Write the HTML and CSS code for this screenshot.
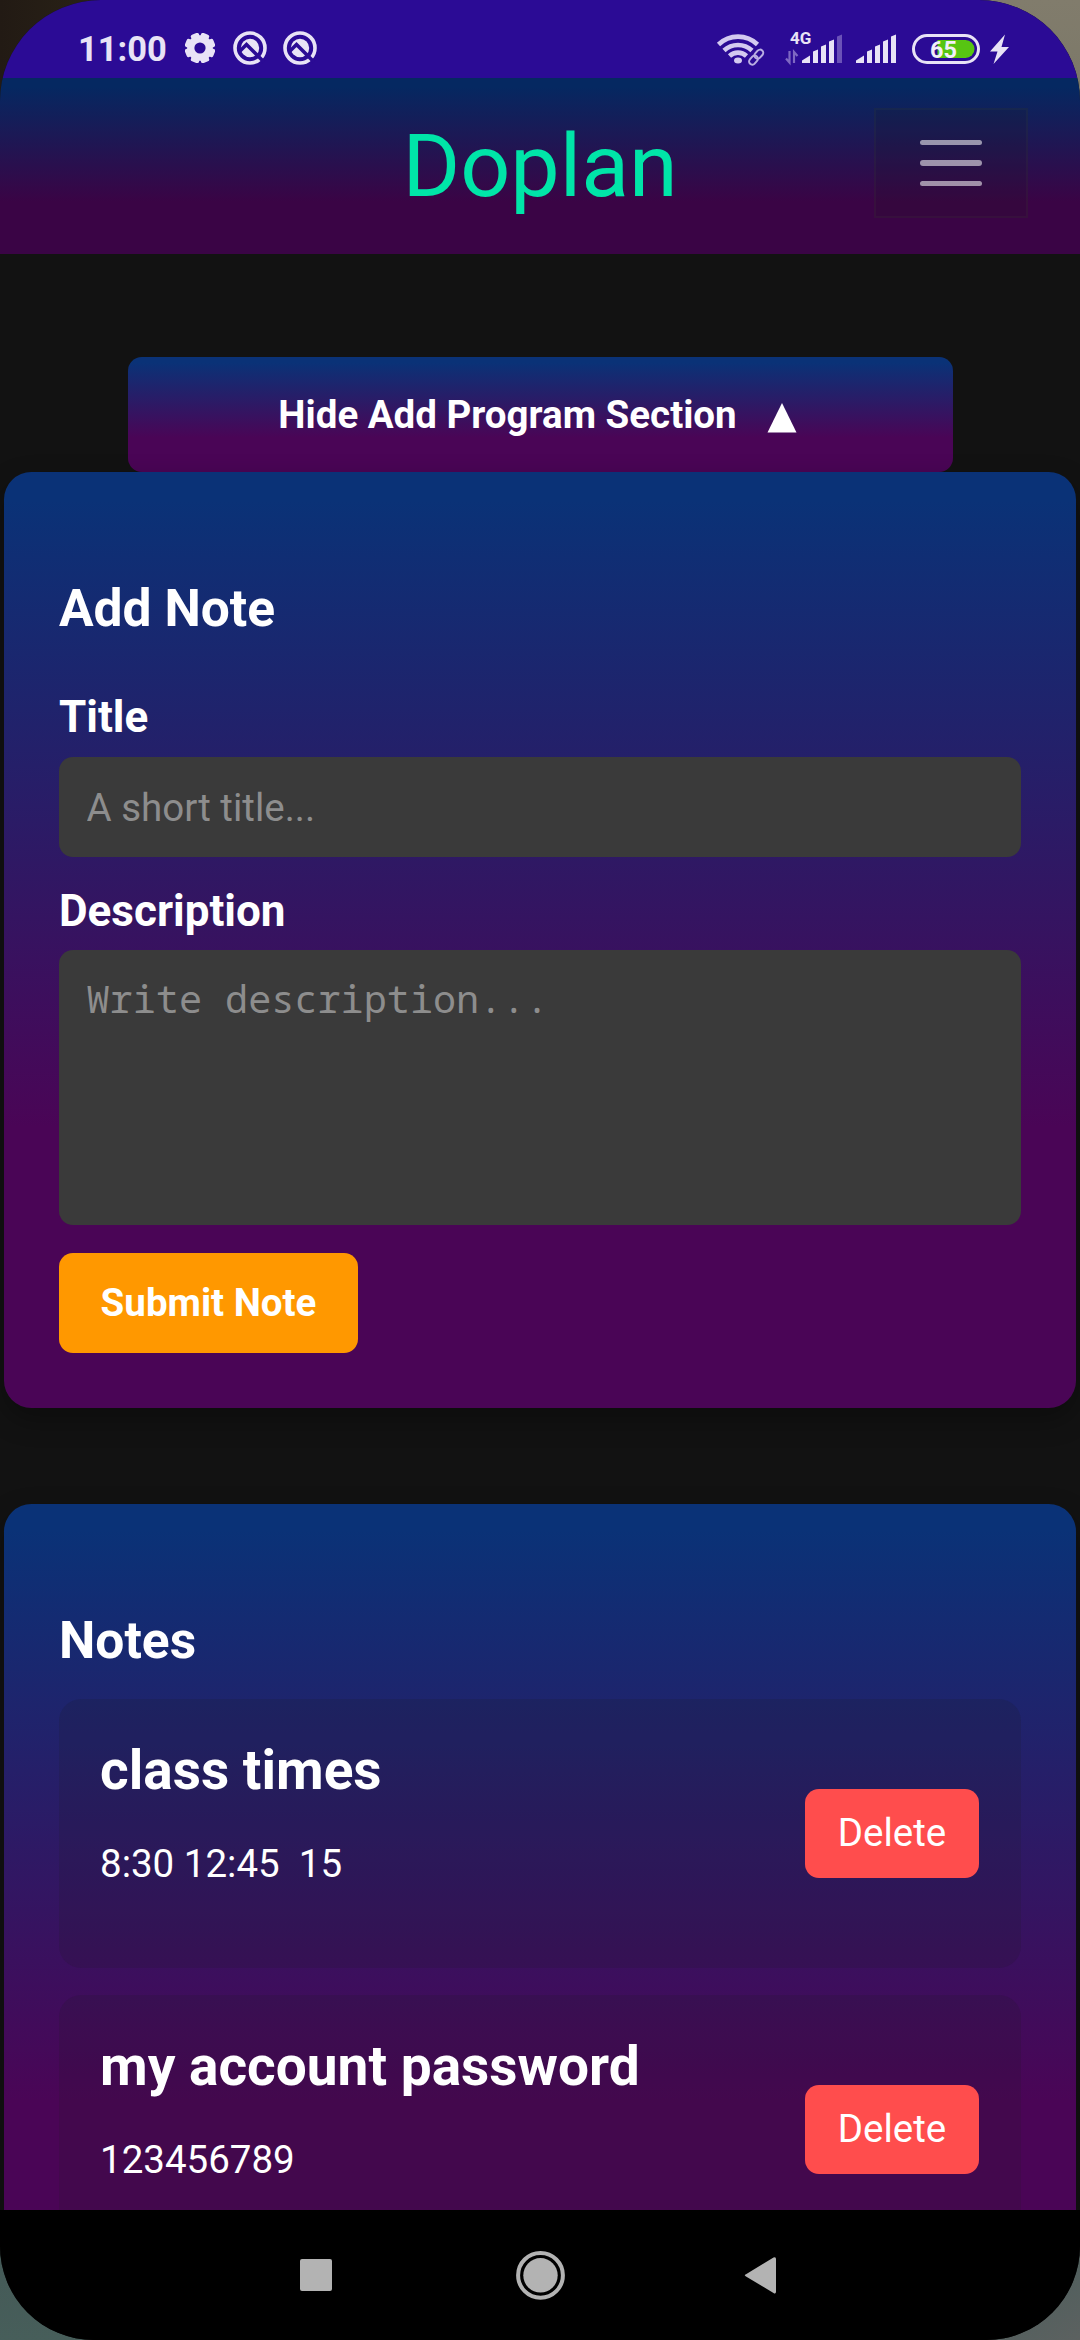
FILE: index.html
```html
<!DOCTYPE html>
<html lang="en">
<head>
<meta charset="utf-8">
<title>Doplan</title>
<link rel="stylesheet" href="styles.css">
</head>
<body>
<div class="screen">
  <div class="statusbar">
    <span class="clock">11:00</span>
    <svg class="gear" width="30" height="30" viewBox="-15 -15 30 30"><g fill="#e8e3f6" transform="rotate(22.5)"><rect x="-4.3" y="-15.300" width="8.600" height="30.600" rx="2"/><rect x="-4.3" y="-15.300" width="8.600" height="30.600" rx="2" transform="rotate(45)"/><rect x="-4.3" y="-15.300" width="8.600" height="30.600" rx="2" transform="rotate(90)"/><rect x="-4.3" y="-15.300" width="8.600" height="30.600" rx="2" transform="rotate(135)"/><circle r="12.8"/></g><circle r="5.6" fill="#2b0b95"/></svg>
    <svg class="badge" width="34" height="34" viewBox="-17 -17 34 34"><circle r="15" fill="none" stroke="#e8e3f6" stroke-width="3.6"/><circle r="9.2" fill="#e8e3f6"/><path d="M-10 3L-3.500-3.500L14 14" fill="none" stroke="#2b0b95" stroke-width="3.600"/></svg>
    <svg class="badge" width="34" height="34" viewBox="-17 -17 34 34"><circle r="15" fill="none" stroke="#e8e3f6" stroke-width="3.6"/><circle r="9.2" fill="#e8e3f6"/><path d="M-10 3L-3.500-3.500L14 14" fill="none" stroke="#2b0b95" stroke-width="3.600"/></svg>
    <svg class="system" width="300" height="40" viewBox="714 28 300 40">
      <g fill="none" stroke="#d3caf0" stroke-width="4.6"><path d="M718.5 44.5A28 28 0 0 1 757.5 44.5"/><path d="M724 50.500A20.500 20.500 0 0 1 752 50.500"/><path d="M729.500 56A12.500 12.500 0 0 1 746.500 56"/></g>
      <ellipse cx="738" cy="60.500" rx="4" ry="3" fill="#d3caf0"/>
      <g fill="none" stroke="#b9aee2" stroke-width="2" transform="rotate(-48 756 57)"><rect x="747" y="54" width="10" height="6.400" rx="3.200"/><rect x="755" y="54" width="10" height="6.400" rx="3.200"/></g>
      <text x="790" y="44" class="net">4G</text>
      <path d="M789.500 51v11.500l-3.500-4M794 63V52l3.500 4" fill="none" stroke="#7e68c2" stroke-width="2.200"/>
      <g fill="#e8e3f6"><path d="M802 63v-2.500l8-5V63z"/><path d="M813 63V51.500l5-2V63z"/><path d="M821 63V46.500l5-2V63z"/><path d="M829 63V41.500l5-2V63z"/><path d="M856 63v-2.500l8-5V63z"/><path d="M867 63V51.500l5-2V63z"/><path d="M875 63V46.500l5-2V63z"/><path d="M883 63V41.500l5-2V63z"/><path d="M891 63V36.500l5-2V63z"/></g>
      <path d="M837 63V36.500l5-2V63z" fill="#6b52b8"/>
      <rect x="913.500" y="35.500" width="65" height="27" rx="13.500" fill="none" stroke="#e8e3f6" stroke-width="3"/>
      <path d="M937.500 40h28a9 9 0 0 1 0 18h-28z" fill="#57c512"/>
      <text x="930" y="57.500" class="charge">65</text>
      <path d="M1005 34.500l-15 17h7.500l-4 12.500 15.500-17h-7.500z" fill="#e8e3f6"/>
    </svg>
  </div>
  <header class="header">
    <h1 class="brand">Doplan</h1>
    <button class="toggler" aria-label="Menu"><span></span><span></span><span></span></button>
  </header>
  <main class="content">
    <button class="toggle">Hide Add Program Section<svg width="30" height="30" viewBox="0 0 30 30"><path d="M15 0L29.500 29.500H.5z" fill="#fff"/></svg></button>
    <section class="card form">
      <h3>Add Note</h3>
      <label for="title">Title</label>
      <input id="title" type="text" placeholder="A short title...">
      <label for="description">Description</label>
      <textarea id="description" placeholder="Write description..."></textarea>
      <button class="submit">Submit Note</button>
    </section>
    <section class="card notes">
      <h3>Notes</h3>
      <article class="note"><div><h4>class times</h4><p>8:30 12:45  15</p></div><button class="delete">Delete</button></article>
      <article class="note"><div><h4>my account password</h4><p>123456789</p></div><button class="delete">Delete</button></article>
    </section>
  </main>
  <nav class="navbar">
    <svg width="1080" height="130" viewBox="0 0 1080 130"><g fill="#b3b3b3"><rect x="300" y="49" width="32" height="32" rx="2"/><circle cx="540.5" cy="65.300" r="17.200"/><circle cx="540.5" cy="65.300" r="22.400" fill="none" stroke="#b3b3b3" stroke-width="4"/><path d="M746 64.300L773.500 47.500Q776 46.500 776 49V81.500Q776 84.500 773.500 83L746 66.500Q743.500 65.300 746 64.300z"/></g></svg>
  </nav>
</div>
</body>
</html>
```
FILE: styles.css
```css
* { box-sizing: border-box; }

body {
  margin: 0;
  width: 1080px;
  height: 2340px;
  overflow: hidden;
  font-family: Roboto, "Liberation Sans", sans-serif;
  background:
    linear-gradient(90deg, #221a14, #2b2417) 0 0 / 120px 120px no-repeat,
    linear-gradient(#817c6c, #7a7767) 100% 0 / 120px 120px no-repeat,
    linear-gradient(#435856, #475e5a) 0 100% / 120px 120px no-repeat,
    linear-gradient(150deg, #4f5f5d 50%, #5c6160) 100% 100% / 120px 120px no-repeat,
    #121212;
}

button, input, textarea {
  border: 0;
  font: inherit;
  color: #fff;
}

h1, h3, h4, p { margin: 0; }

.screen {
  height: 2340px;
  display: flex;
  flex-direction: column;
  overflow: hidden;
  background: #121212;
  border-radius: 101px 101px 94px 94px;
}

.statusbar {
  flex: none;
  height: 78px;
  display: flex;
  align-items: center;
  padding: 18px 66px 0 78px;
  background: #2b0b95;
}

.clock {
  width: 107px;
  padding-top: 1px;
  font-size: 34.5px;
  font-weight: 700;
  line-height: 40px;
  color: #e8e3f6;
}

.badge { margin-left: 18px; }
.badge + .badge { margin-left: 16px; }
.system { margin-left: auto; }

.net {
  font-size: 17px;
  font-weight: 700;
  fill: #e8e3f6;
}

.charge {
  font-size: 23.5px;
  font-weight: 700;
  fill: #f2effa;
}

.header {
  flex: none;
  height: 176px;
  display: grid;
  grid-template-columns: 1fr auto 1fr;
  align-items: center;
  padding: 0 52px;
  background: linear-gradient(#052861 5%, #3a0445 70%);
}

.brand {
  grid-column: 2;
  font-size: 88px;
  font-weight: 400;
  line-height: 104px;
  color: #00e5a8;
}

.toggler {
  justify-self: end;
  width: 154px;
  height: 110px;
  margin-top: -6px;
  padding: 0;
  display: flex;
  flex-direction: column;
  align-items: center;
  justify-content: center;
  gap: 15px;
  background: rgba(24, 24, 24, 0.15);
  border: 2px solid rgba(80, 95, 60, 0.1);
}

.toggler span {
  width: 62px;
  height: 5.5px;
  border-radius: 3px;
  background: rgba(255, 255, 255, 0.55);
}

.content {
  flex: 1;
  min-height: 0;
  overflow: hidden;
  padding: 103px 4px 0;
  display: flex;
  flex-direction: column;
}

.toggle {
  flex: none;
  align-self: center;
  width: 825px;
  height: 115px;
  padding: 0 5px 1px 0;
  display: flex;
  align-items: center;
  justify-content: center;
  gap: 30px;
  border-radius: 14px;
  font-size: 38.5px;
  font-weight: 700;
  background: linear-gradient(#0a3277 5%, #4a0556 70%);
}

.toggle svg { margin-top: 8px; }

.card {
  flex: none;
  padding: 0 55px;
  border-radius: 27.5px;
  color: #fff;
  background: linear-gradient(#0a3277 3%, #4a0556 70%);
  box-shadow: 0 11px 28px rgba(0, 0, 0, 0.3);
}

.card h3 {
  font-size: 51.5px;
  line-height: 60px;
  font-weight: 700;
}

.form {
  height: 936px;
  padding-top: 107px;
  display: flex;
  flex-direction: column;
  align-items: flex-start;
}

.form label {
  font-size: 44px;
  line-height: 52px;
  font-weight: 700;
}

.form h3 + label { margin-top: 52px; }

.form input,
.form textarea {
  width: 100%;
  padding: 0 27.5px;
  border-radius: 14px;
  background: #3a3a3a;
  font-size: 38.5px;
}

.form input {
  height: 100px;
  margin: 14px 0 28px;
}

.form textarea {
  height: 275px;
  padding-top: 22px;
  margin: 13px 0 28px;
  resize: none;
  font-family: "Noto Sans Mono", "Droid Sans Mono", "DejaVu Sans Mono", monospace;
}

.form ::placeholder { color: #8d8d8d; opacity: 1; }

.submit {
  width: 299px;
  height: 100px;
  padding: 0 0 2px;
  border-radius: 14px;
  background: #ff9800;
  font-size: 38.5px;
  font-weight: 700;
}

.notes {
  height: 852px;
  margin-top: 96px;
  padding-top: 107px;
}

.note {
  height: 268.5px;
  margin-bottom: 27.5px;
  padding: 0 42px 0 41px;
  display: flex;
  align-items: center;
  justify-content: space-between;
  border-radius: 22px;
  background: rgba(30, 30, 30, 0.15);
}

.notes h3 { margin-bottom: 28px; }

.note > div {
  align-self: flex-start;
  padding-top: 39px;
}

.note h4 {
  font-size: 55px;
  line-height: 64px;
}

.note p {
  margin-top: 39px;
  font-size: 38.5px;
  line-height: 46px;
  white-space: pre;
}

.delete {
  width: 174px;
  height: 89px;
  padding: 0 0 2px;
  border-radius: 14px;
  background: #ff4d4d;
  font-size: 38.5px;
}

.navbar {
  flex: none;
  height: 130px;
  background: #000;
}
```
